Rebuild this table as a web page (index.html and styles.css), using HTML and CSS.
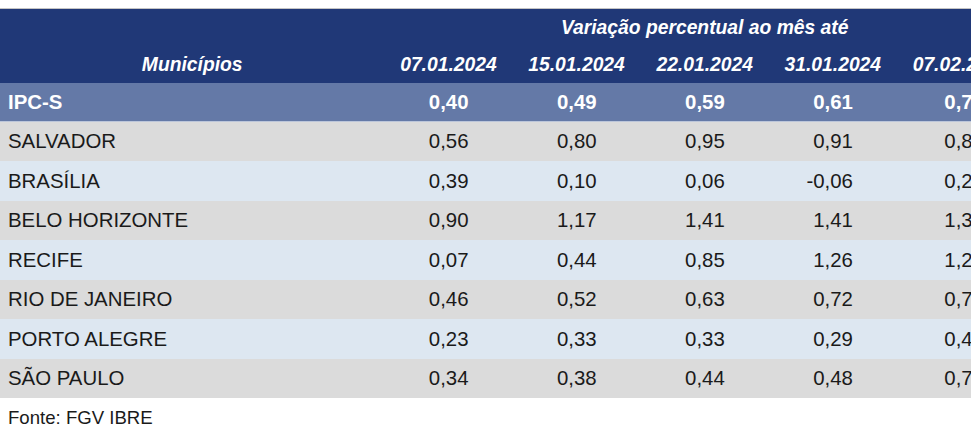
FILE: index.html
```html
<!DOCTYPE html>
<html lang="pt-BR">
<head>
<meta charset="utf-8">
<title>IPC-S Municípios</title>
<link rel="stylesheet" href="styles.css">
</head>
<body>
<div class="wrap">
  <table class="ipc">
    <colgroup>
      <col class="c-name">
      <col class="c-num"><col class="c-num"><col class="c-num"><col class="c-num"><col class="c-num">
    </colgroup>
    <thead>
      <tr class="h1">
        <th></th>
        <th colspan="5">Variação percentual ao mês até</th>
      </tr>
      <tr class="h2">
        <th>Municípios</th>
        <th>07.01.2024</th>
        <th>15.01.2024</th>
        <th>22.01.2024</th>
        <th>31.01.2024</th>
        <th>07.02.2024</th>
      </tr>
    </thead>
    <tbody>
      <tr class="total">
        <td>IPC-S</td><td>0,40</td><td>0,49</td><td>0,59</td><td>0,61</td><td>0,71</td>
      </tr>
      <tr class="grey">
        <td>SALVADOR</td><td>0,56</td><td>0,80</td><td>0,95</td><td>0,91</td><td>0,86</td>
      </tr>
      <tr class="blue">
        <td>BRASÍLIA</td><td>0,39</td><td>0,10</td><td>0,06</td><td>-0,06</td><td>0,21</td>
      </tr>
      <tr class="grey">
        <td>BELO HORIZONTE</td><td>0,90</td><td>1,17</td><td>1,41</td><td>1,41</td><td>1,38</td>
      </tr>
      <tr class="blue">
        <td>RECIFE</td><td>0,07</td><td>0,44</td><td>0,85</td><td>1,26</td><td>1,24</td>
      </tr>
      <tr class="grey">
        <td>RIO DE JANEIRO</td><td>0,46</td><td>0,52</td><td>0,63</td><td>0,72</td><td>0,78</td>
      </tr>
      <tr class="blue">
        <td>PORTO ALEGRE</td><td>0,23</td><td>0,33</td><td>0,33</td><td>0,29</td><td>0,42</td>
      </tr>
      <tr class="grey">
        <td>SÃO PAULO</td><td>0,34</td><td>0,38</td><td>0,44</td><td>0,48</td><td>0,72</td>
      </tr>
    </tbody>
  </table>
  <p class="source">Fonte: FGV IBRE</p>
</div>
</body>
</html>
```
FILE: styles.css
```css
html, body {
  margin: 0;
  padding: 0;
  background: #ffffff;
}

body {
  font-family: "Liberation Sans", Arial, sans-serif;
  overflow: hidden;
  width: 971px;
  height: 439px;
}

.wrap {
  padding-top: 8px;
  width: 971px;
  overflow: hidden;
}

.ipc {
  border-collapse: collapse;
  table-layout: fixed;
  width: 1025px;
  border-top: 1px solid #c4c4c4;
}

.c-name { width: 384px; }
.c-num { width: 128px; }

.ipc th {
  background: #203877;
  color: #ffffff;
  font-weight: bold;
  font-style: italic;
  font-size: 19.3px;
  text-align: center;
  padding: 0;
  vertical-align: middle;
}

.h1 th { height: 37px; }
.h2 th { height: 37px; }

.ipc td {
  height: 39px;
  padding: 0 44px 0 0;
  font-size: 20.4px;
  color: #1a1a1a;
  text-align: right;
  vertical-align: middle;
  white-space: nowrap;
}

.ipc td:first-child {
  text-align: left;
  padding: 0 0 0 8px;
}

.ipc td:last-child {
  padding-right: 41px;
}

.total td {
  background: #6479a7;
  color: #ffffff;
  font-weight: bold;
  height: 38px;
  border-bottom: 1px solid #bcc6da;
}

.grey td { background: #dbdbdb; }
.blue td { background: #dde7f1; height: 40px; }

.source {
  margin: 0;
  padding: 10px 0 0 8px;
  font-size: 18.6px;
  color: #1a1a1a;
  line-height: 20px;
}
```
